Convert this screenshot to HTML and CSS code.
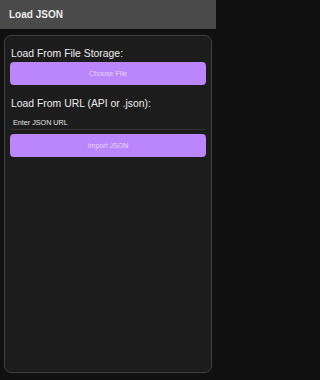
FILE: index.html
```html
<!DOCTYPE html>
<html>
<head>
<meta charset="utf-8">
<meta name="viewport" content="width=216">
<link rel="stylesheet" href="styles.css">
</head>
<body>
<header class="topbar"><h1 class="topbar-title">Load JSON</h1></header>
<main class="card">
  <h2 class="section-title">Load From File Storage:</h2>
  <button class="btn">Choose File</button>
  <h2 class="section-title section-gap">Load From URL (API or .json):</h2>
  <div class="url-field">Enter JSON URL</div>
  <button class="btn btn-import">Import JSON</button>
</main>
</body>
</html>
```
FILE: styles.css
```css
html {
  margin: 0;
  padding: 0;
  height: 100%;
  background: #101010;
}
body {
  margin: 0;
  padding: 0;
  height: 100%;
  width: 216px;
  background: #101010;
  font-family: "Liberation Sans", Arial, sans-serif;
  color: #ececec;
  display: flex;
  flex-direction: column;
}
.topbar {
  height: 29px;
  flex: none;
  background: #4a4a4a;
  display: flex;
  align-items: center;
  padding-left: 9px;
  box-sizing: border-box;
}
.topbar-title {
  margin: 0;
  font-size: 10px;
  font-weight: bold;
  color: #ececec;
}
.card {
  margin: 6px 4px 7px 4px;
  flex: 1;
  background: #1c1c1c;
  border: 1px solid #404040;
  border-radius: 7px;
  padding: 11px 5px 0 5px;
  display: flex;
  flex-direction: column;
}
.section-title {
  margin: 0 0 1px 1px;
  font-size: 10.4px;
  line-height: 14px;
  font-weight: normal;
  color: #ececec;
}
.section-gap {
  margin-top: 12px;
  margin-bottom: 0;
}
.btn {
  height: 23px;
  flex: none;
  border: none;
  border-radius: 4px;
  background: #bb86fc;
  color: #e6d6ff;
  font-family: inherit;
  font-size: 7.1px;
  padding: 0;
  width: 100%;
}
.btn-import {
  margin-top: 4px;
}
.url-field {
  font-size: 7.2px;
  line-height: 9px;
  padding: 7px 3px 2px 3px;
  border-bottom: 1px solid #333;
  color: #e4e4e4;
}
```
